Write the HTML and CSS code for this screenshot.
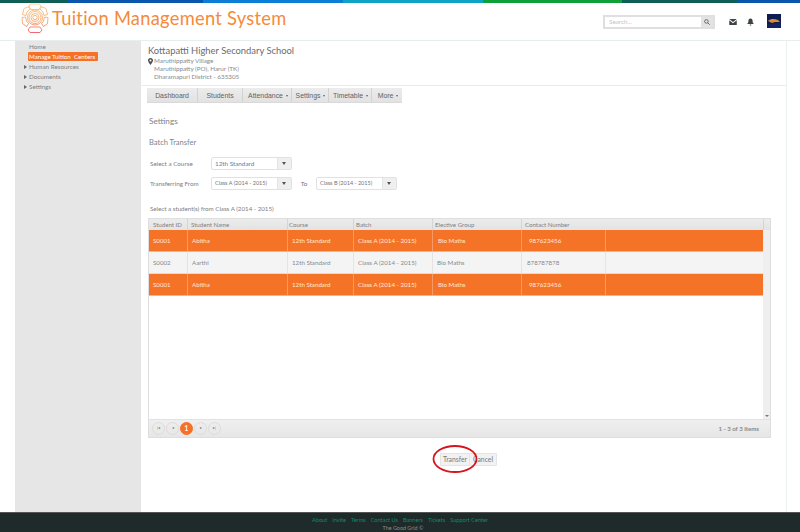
FILE: index.html
```html
<!DOCTYPE html>
<html lang="en">
<head>
<meta charset="utf-8">
<title>Tuition Management System</title>
<link rel="stylesheet" href="styles.css">
</head>
<body>
<div class="strip"><i class="s1"></i><i class="s2"></i><i class="s3"></i><i class="s4"></i><i class="s5"></i><i class="s6"></i><i class="s7"></i></div>
<header class="top">
  <div class="brand">
    <svg class="logo" viewBox="0 0 30 30" fill="none" stroke="url(#lg)" stroke-width="0.9">
      <defs><linearGradient id="lg" gradientUnits="userSpaceOnUse" x1="0" y1="0" x2="0" y2="30"><stop offset="0" stop-color="#fbc98a"/><stop offset=".6" stop-color="#f8a66a"/><stop offset="1" stop-color="#ee5560"/></linearGradient></defs>
      <circle cx="15" cy="14.500" r="2.200"/><circle cx="15" cy="14.500" r="4"/><circle cx="15" cy="14.500" r="6"/><circle cx="15" cy="14.500" r="7.500"/>
      <path d="M10.500 1h9l2 3.500-2.500 2h-8L8.500 4.500z"/>
      <path d="M21 3.500l5 2 1.500 6-3.500 1-1-3.500-3.500-3.500z"/>
      <path d="M9 3.500l-5 2-1.500 6 3.500 1 1-3.500 3.500-3.500z"/>
      <path d="M24.500 14l3.500.5-.5 6-4 3-2-3 2-2.500z"/>
      <path d="M5.500 14L2 14.500l.5 6 4 3 2-3-2-2.500z"/>
      <path d="M10 24h10l2 3-2 2.500H10L8 27z"/>
    </svg>
    <span class="title">Tuition Management System</span>
  </div>
  <div class="tools">
    <div class="search"><span class="ph">Search...</span><span class="sbtn">
      <svg viewBox="0 0 10 10" width="6" height="6" fill="none" stroke="#666" stroke-width="1.600"><circle cx="4" cy="4" r="3"/><path d="M6.200 6.200L9.500 9.500"/></svg></span></div>
    <svg class="ic" viewBox="0 0 10 8" width="8" height="6"><path fill="#3d4347" d="M0 0h10L5 4zM0 1.500l5 4 5-4V8H0z"/></svg>
    <svg class="ic" viewBox="0 0 10 10" width="7" height="8"><path fill="#3d4347" d="M5 0c2.300 0 3 2 3 4s1 3 2 4H0c1-1 2-2 2-4s.7-4 3-4zM4 8.600h2V10H4z"/></svg>
    <svg class="avatar" viewBox="0 0 14 14"><rect width="14" height="14" fill="#0d1c52"/><path d="M1 7c3-3 7-2 10-1l2 2-5 0-3 1z" fill="#d98a2c"/><path d="M0 10l14-1v5H0z" fill="#15205e"/></svg>
  </div>
</header>
<div class="layout">
  <nav class="side">
    <a class="nav plain">Home</a>
    <a class="nav active">Manage Tuition&nbsp; Centers</a>
    <a class="nav arrow">Human Resources</a>
    <a class="nav arrow">Documents</a>
    <a class="nav arrow">Settings</a>
  </nav>
  <main class="main">
    <section class="school">
      <h1>Kottapatti Higher Secondary School</h1>
      <div class="addr">
        <svg class="pin" viewBox="0 0 8 11" width="5" height="7"><path fill="#4a5257" fill-rule="evenodd" d="M4 0a4 4 0 0 1 4 4c0 2.500-4 7-4 7S0 6.500 0 4a4 4 0 0 1 4-4zm0 2.400a1.600 1.600 0 1 0 0 3.200 1.600 1.600 0 0 0 0-3.200z"/></svg>
        <div>Maruthippatty Village<br>Maruthippatty (PO), Harur (TK)<br>Dharamapuri District - 635305</div>
      </div>
    </section>
    <div class="tabs">
      <span class="tab w1">Dashboard</span><span class="tab w2">Students</span><span class="tab w3">Attendance<b></b></span><span class="tab w4">Settings<b></b></span><span class="tab w5">Timetable<b></b></span><span class="tab w6">More<b></b></span>
    </div>
    <h2 class="settings">Settings</h2>
    <h3 class="batch">Batch Transfer</h3>
    <div class="row r1">
      <label class="lab">Select a Course</label>
      <div class="sel"><span class="val blue">12th Standard</span><span class="dd"></span></div>
    </div>
    <div class="row r2">
      <label class="lab">Transferring From</label>
      <div class="sel"><span class="val sm">Class A (2014 - 2015)</span><span class="dd"></span></div>
      <span class="to">To</span>
      <div class="sel"><span class="val sm">Class B (2014 - 2015)</span><span class="dd"></span></div>
    </div>
    <p class="hint">Select a student(s) from Class A (2014 - 2015)</p>
    <div class="grid">
      <div class="ghead">
        <span class="c1">Student ID</span><span class="c2">Student Name</span><span class="c3">Course</span><span class="c4">Batch</span><span class="c5">Elective Group</span><span class="c6 wide">Contact Number</span><span class="c8"></span>
      </div>
      <div class="gbody">
        <div class="rows">
          <div class="grow on"><span class="c1">S0001</span><span class="c2">Abitha</span><span class="c3">12th Standard</span><span class="c4">Class A (2014 - 2015)</span><span class="c5">Bio Maths</span><span class="c6">987623456</span><span class="c7"></span></div>
          <div class="grow off"><span class="c1">S0002</span><span class="c2">Aarthi</span><span class="c3">12th Standard</span><span class="c4">Class A (2014 - 2015)</span><span class="c5">Bio Maths</span><span class="c6">878787878</span><span class="c7"></span></div>
          <div class="grow on"><span class="c1">S0001</span><span class="c2">Abitha</span><span class="c3">12th Standard</span><span class="c4">Class A (2014 - 2015)</span><span class="c5">Bio Maths</span><span class="c6">987623456</span><span class="c7"></span></div>
        </div>
        <div class="scroll"><span class="sdown"></span></div>
      </div>
      <div class="pager">
        <span class="pg">|◂</span><span class="pg">◂</span><span class="pg cur">1</span><span class="pg">▸</span><span class="pg">▸|</span>
        <span class="count">1 - 3 of 3 items</span>
      </div>
    </div>
    <div class="actions">
      <span class="btn transfer">Transfer</span><span class="btn cancel">Cancel</span>
      <svg class="ring" viewBox="0 0 46 30" width="46" height="30" fill="none"><ellipse cx="23" cy="15" rx="21.500" ry="13" stroke="#d8141c" stroke-width="1.800"/></svg>
    </div>
  </main>
  <div class="rail"></div>
</div>
<footer class="foot">
  <div class="links"><a>About</a><a>Invite</a><a>Terms</a><a>Contact Us</a><a>Banners</a><a>Tickets</a><a>Support Center</a></div>
  <div class="copy">The Good Grid ©</div>
</footer>
</body>
</html>
```
FILE: styles.css
```css
* { box-sizing: border-box; }
html, body { margin: 0; height: 532px; overflow: hidden; }
body { font-family: Lato, "Open Sans", "Liberation Sans", sans-serif; font-size: 6.300px; color: #6f7478; background: #fff; display: flex; flex-direction: column; }
.strip { height: 3px; display: flex; flex: none; }
.strip i { display: block; height: 3px; }
.s1 { width: 67px; background: #0f5f57; }
.s2 { width: 136px; background: #0a56ad; }
.s3 { width: 140px; background: #0d7ed6; }
.s4 { width: 140px; background: #0ca3c4; }
.s5 { width: 139px; background: #10a038; }
.s6 { width: 115px; background: #0f5f57; }
.s7 { flex: 1; background: #0a56ad; }
.top { height: 38px; flex: none; display: flex; align-items: center; justify-content: space-between; border-bottom: 1px solid #e8eeee; }
.brand { display: flex; align-items: center; margin: -7px 0 0 20px; }
.logo { width: 30px; height: 30px; }
.title { font-size: 18.300px; color: #f58a3c; margin-left: 2px; letter-spacing: .28px; line-height: 30px; margin-top: -1px; white-space: nowrap; }
.tools { display: flex; align-items: center; }
.search { width: 112px; height: 14px; border: 2px solid #dfdfdf; display: flex; align-items: stretch; margin-right: 14px; background: #fff; }
.ph { flex: 1; padding-left: 4px; line-height: 10px; color: #c4c4c4; font-size: 6.300px; }
.sbtn { width: 12px; background: #e3e3e3; display: flex; align-items: center; justify-content: center; }
.ic { margin-right: 10px; }
.avatar { width: 14px; height: 14px; margin-right: 19px; margin-left: 3px; margin-top: -1px; }
.layout { flex: 1; display: flex; min-height: 0; }
.side { width: 126px; margin-left: 15px; background: #e6e6e6; padding: 1px 0 0 14px; flex: none; }
.nav { display: block; font-size: 6.300px; line-height: 10px; color: #7c7f82; }
.plain { height: 10px; }
.active { width: 70px; height: 9px; line-height: 9px; margin: 0 0 1px -1px; background: #f57127; color: #fff; border-radius: 1px; padding-left: 1px; font-size: 6.200px; white-space: nowrap; }
.arrow { position: relative; height: 10px; }
.arrow::before { content: ""; position: absolute; left: -5px; top: 3px; border-left: 3px solid #666; border-top: 2px solid transparent; border-bottom: 2px solid transparent; }
.main { width: 645px; flex: none; padding-left: 6px; background: #fff; min-width: 0; }
.rail { flex: 1; border-left: 1px solid #e8f0f0; }
.school { height: 45px; width: 645px; margin-left: -6px; padding: 3px 0 0 7px; border-bottom: 1px solid #e8eeee; }
h1 { margin: 0; font-size: 9.400px; font-weight: 400; line-height: 13px; color: #676c70; }
.addr { display: flex; gap: 1px; font-size: 6.300px; line-height: 8px; color: #858a8d; }
.pin { margin-top: 1px; flex: none; }
.tabs { display: flex; width: 255px; height: 15px; background: linear-gradient(#ececec, #e2e2e2); margin-top: 2px; border-bottom: 1px solid #d9d9d9; }
.tab { font-family: "Liberation Sans", Arial, sans-serif; font-size: 6.900px; line-height: 15px; color: #5e6366; text-align: center; border-right: 1px solid #d2d2d2; white-space: nowrap; }
.tab b { display: inline-block; margin-left: 3px; vertical-align: 1px; border-top: 2px solid #666; border-left: 1.500px solid transparent; border-right: 1.500px solid transparent; }
.w1 { width: 51px; } .w2 { width: 45px; } .w3 { width: 49px; padding-left: 2px; } .w4 { width: 37px; padding-left: 1px; } .w5 { width: 43px; padding-left: 1px; } .w6 { width: 30px; padding-left: 2px; border-right: 0; }
h2.settings { margin: 13px 0 0 2px; font-size: 8.200px; line-height: 11px; font-weight: 400; color: #7d8286; }
h3.batch { margin: 11px 0 0 2px; font-size: 7.500px; line-height: 10px; font-weight: 400; color: #7a8590; }
.row { display: flex; align-items: center; margin-left: 3px; }
.r1 { margin-top: 9px; }
.r2 { margin-top: 7px; }
.lab { width: 61px; font-size: 6.300px; color: #7b7e81; }
.sel { width: 81px; height: 13px; border: 1px solid #e1e1e1; border-radius: 2px; display: flex; align-items: center; background: #fff; }
.val { flex: 1; padding-left: 3px; font-size: 6.300px; line-height: 11px; white-space: nowrap; overflow: hidden; }
.val.sm { font-size: 5.500px; }
.blue { color: #5a7fa8; }
.dd { width: 14px; height: 11px; background: #efefef; position: relative; border-left: 1px solid #e4e4e4; flex: none; }
.dd::after { content: ""; position: absolute; left: 4px; top: 4px; border-top: 3px solid #555; border-left: 2px solid transparent; border-right: 2px solid transparent; }
.to { width: 24px; text-align: center; font-size: 6.300px; }
.hint { margin: 15px 0 0 3px; font-size: 6.200px; line-height: 8px; color: #7b7e81; }
.grid { width: 623px; margin: 5px 0 0 1px; border: 1px solid #dedede; height: 220px; background: #fff; display: flex; flex-direction: column; }
.ghead { height: 11px; flex: none; display: flex; background: linear-gradient(#ececec, #e3e3e3); font-size: 6.100px; line-height: 11px; color: #7d8184; }
.ghead span { border-right: 1px solid #d4d4d4; white-space: nowrap; }
.ghead .c8 { border-right: 0; flex: 1; padding: 0; }
.c1 { width: 39px; flex: none; padding-left: 4px; }
.c2 { width: 100px; flex: none; padding-left: 3px; }
.c3 { width: 66px; flex: none; padding-left: 1px; }
.c4 { width: 79px; flex: none; padding-left: 2px; }
.c5 { width: 89px; flex: none; padding-left: 2px; }
.c6 { width: 84px; flex: none; padding-left: 3px; }
.c6.wide { width: 242px; }
.c7 { width: 157px; flex: none; }
.gbody { flex: 1; display: flex; min-height: 0; }
.rows { width: 614px; flex: none; }
.grow { height: 22px; display: flex; font-size: 6.200px; line-height: 21px; }
.grow span { border-right: 1px solid; white-space: nowrap; }
.grow .c2, .grow .c3, .grow .c4 { padding-left: 4px; }
.grow .c5 { padding-left: 5px; }
.grow .c6 { padding-left: 7px; }
.on { background: #f57327; color: #ffe9dc; border-bottom: 1px solid #f0b68f; }
.on span { border-color: #f79a63; }
.off { background: #f4f4f4; color: #85898c; border-bottom: 1px solid #dcdcdc; }
.off span { border-color: #e4e4e4; }
.grow.off .c5 { padding-left: 4px; }
.grow.off .c6 { padding-left: 5px; }
.grow .c7 { border-right: 0; }
.scroll { flex: 1; background: #efefef; position: relative; }
.sdown { position: absolute; left: 2px; bottom: 2px; border-top: 2px solid #777; border-left: 2px solid transparent; border-right: 2px solid transparent; }
.pager { height: 18px; flex: none; background: linear-gradient(#efefef, #e6e6e6); border-top: 1px solid #e2e2e2; display: flex; align-items: center; padding-left: 3px; gap: 1px; }
.pg { width: 13px; height: 13px; border-radius: 50%; border: 1px solid #dcdcdc; font-size: 3.500px; line-height: 11px; text-align: center; color: #777; }
.cur { background: #f57127; border-color: #f57127; color: #fff; font-size: 6.500px; font-weight: 700; }
.count { margin-left: auto; margin-right: 11px; font-size: 6.100px; color: #85898c; font-weight: 700; }
.actions { position: relative; display: flex; margin: 15px 0 0 293px; height: 13px; }
.btn { height: 13px; border: 1px solid #e4e4e4; background: #f2f2f2; border-radius: 1px; font-size: 6.800px; line-height: 11px; text-align: center; color: #777a7d; }
.transfer { width: 30px; }
.cancel { width: 28px; margin-left: -1px; }
.ring { position: absolute; left: -8.500px; top: -9px; }
.foot { height: 20px; flex: none; background: #1f2a2a; border-top: 1px solid #555; text-align: center; }
.links { display: flex; justify-content: center; gap: 5px; font-size: 5.600px; line-height: 8px; color: #118a6c; padding-top: 3px; }
.copy { font-size: 5.400px; line-height: 8px; color: #8a8f8f; margin-left: 6px; }
```
